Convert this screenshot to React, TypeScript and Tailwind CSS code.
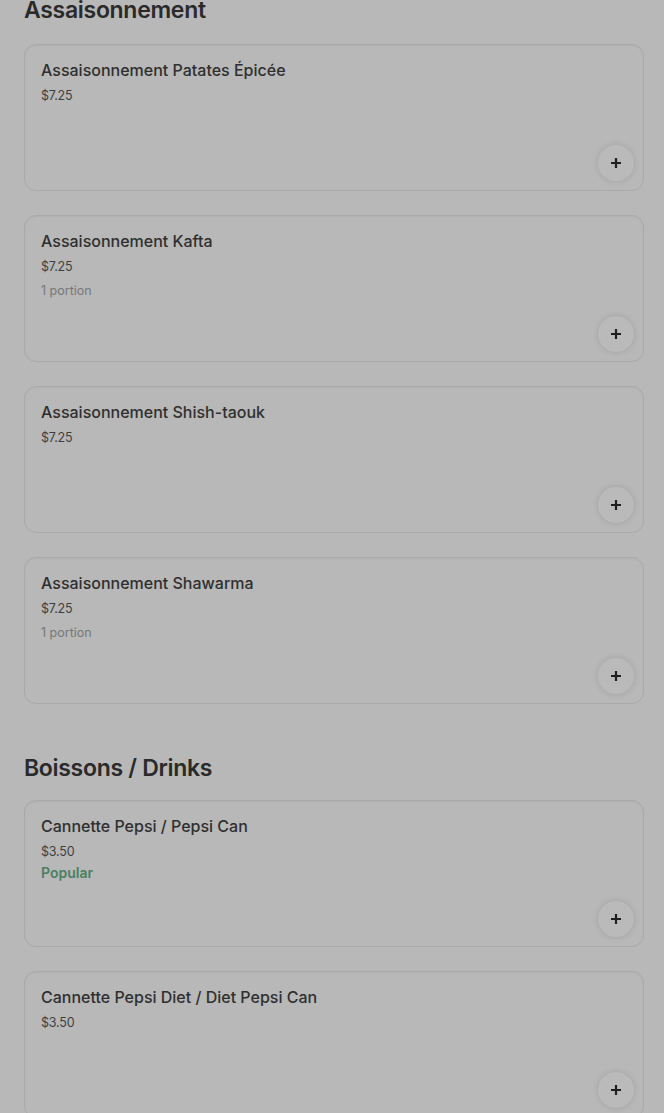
import React from "react";

type Item = { name: string; price: string; portion?: boolean; popular?: boolean };

const seasoning: Item[] = [
  { name: "Assaisonnement Patates Épicée", price: "$7.25" },
  { name: "Assaisonnement Kafta", price: "$7.25", portion: true },
  { name: "Assaisonnement Shish-taouk", price: "$7.25" },
  { name: "Assaisonnement Shawarma", price: "$7.25", portion: true },
];

const drinks: Item[] = [
  { name: "Cannette Pepsi / Pepsi Can", price: "$3.50", popular: true },
  { name: "Cannette Pepsi Diet / Diet Pepsi Can", price: "$3.50" },
];

function Card({ item }: { item: Item }) {
  return (
    <div className="relative h-[147px] rounded-xl border border-[#a9a9a9] bg-[#b8b8b8] px-4 pt-[15px] shadow-[inset_0_1px_2px_rgba(0,0,0,0.04)]">
      <div className="text-[16px] leading-5 font-medium text-[#2f2f2f]">{item.name}</div>
      <div className="mt-[6px] text-[12.5px] leading-5 tracking-[-0.2px] text-[#3f3f3f]">{item.price}</div>
      {item.portion && (
        <div className="mt-[4px] text-[12.5px] leading-5 text-[#777777]">1 portion</div>
      )}
      {item.popular && (
        <div className="mt-[1px] text-[14px] leading-5 font-semibold text-[#4a8062]">Popular</div>
      )}
      <button className="absolute right-[9px] bottom-[9px] flex h-9 w-9 items-center justify-center rounded-full bg-[#bababa] shadow-[0_0_6px_rgba(0,0,0,0.12)]">
        <svg width="12" height="12" viewBox="0 0 12 12">
          <path d="M6 1v10M1 6h10" stroke="#1f1f1f" strokeWidth="2.2" />
        </svg>
      </button>
    </div>
  );
}

export default function App() {
  return (
    <div
      className="min-h-[1113px] w-full overflow-hidden bg-[#b8b8b8] pl-6 pr-5"
      style={{ fontFamily: "Inter, 'Noto Sans', sans-serif" }}
    >
      <h2 className="-mt-[6px] text-[23px] leading-8 font-semibold tracking-[-0.3px] text-[#2a2a2a]">
        Assaisonnement
      </h2>
      <div className="mt-[18px] flex flex-col gap-6">
        {seasoning.map((it) => (
          <Card key={it.name} item={it} />
        ))}
      </div>
      <h2 className="mt-[48px] text-[23px] leading-8 font-semibold tracking-[-0.3px] text-[#2a2a2a]">
        Boissons / Drinks
      </h2>
      <div className="mt-[16px] flex flex-col gap-6">
        {drinks.map((it) => (
          <Card key={it.name} item={it} />
        ))}
      </div>
    </div>
  );
}
